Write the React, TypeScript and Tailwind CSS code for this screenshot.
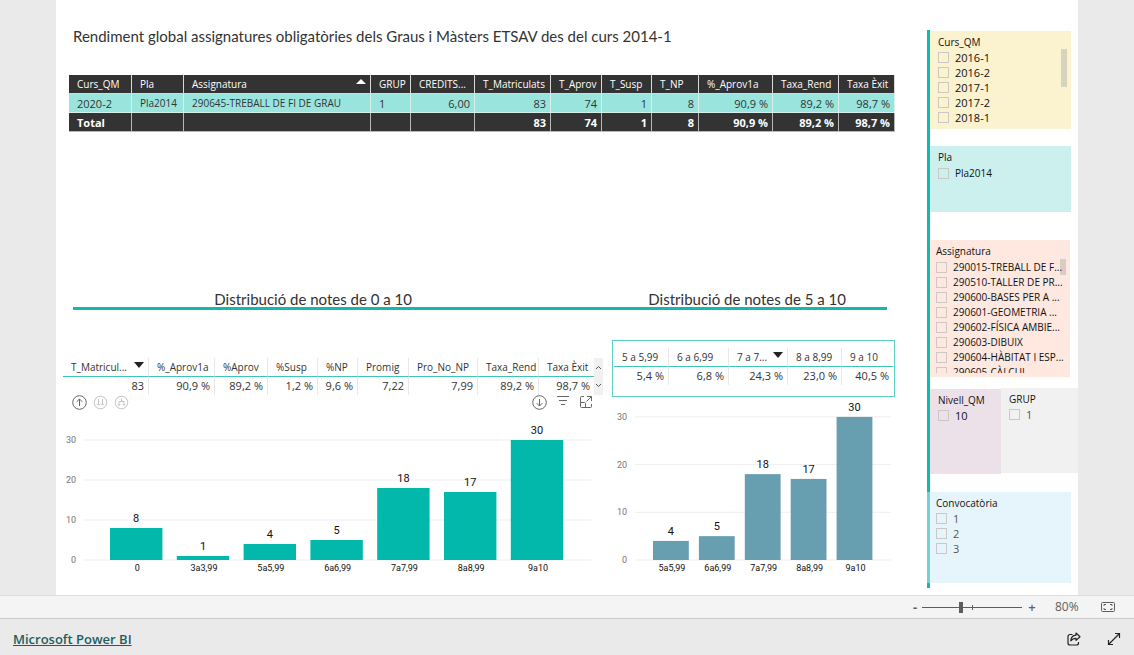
import React from "react";

type Column = { label: string; width: string; value: string; total?: string; left?: boolean; sort?: "asc" | "desc" };

const summary: Column[] = [
  { label: "Curs_QM", width: "w-[63px]", value: "2020-2", total: "Total", left: true },
  { label: "Pla", width: "w-[52px]", value: "Pla2014", left: true },
  { label: "Assignatura", width: "w-[187px]", value: "290645-TREBALL DE FI DE GRAU", left: true, sort: "asc" },
  { label: "GRUP", width: "w-[40px]", value: "1", left: true },
  { label: "CREDITS...", width: "w-[64px]", value: "6,00" },
  { label: "T_Matriculats", width: "w-[76px]", value: "83", total: "83" },
  { label: "T_Aprov", width: "w-[51px]", value: "74", total: "74" },
  { label: "T_Susp", width: "w-[50px]", value: "1", total: "1" },
  { label: "T_NP", width: "w-[47px]", value: "8", total: "8" },
  { label: "%_Aprov1a", width: "w-[74px]", value: "90,9 %", total: "90,9 %" },
  { label: "Taxa_Rend", width: "w-[66px]", value: "89,2 %", total: "89,2 %" },
  { label: "Taxa Èxit", width: "w-[56px]", value: "98,7 %", total: "98,7 %" },
];

const allGrades: Column[] = [
  { label: "T_Matricul...", width: "w-[86px]", value: "83", sort: "desc" },
  { label: "%_Aprov1a", width: "w-[66px]", value: "90,9 %" },
  { label: "%Aprov", width: "w-[53px]", value: "89,2 %" },
  { label: "%Susp", width: "w-[50px]", value: "1,2 %" },
  { label: "%NP", width: "w-[40px]", value: "9,6 %" },
  { label: "Promig", width: "w-[51px]", value: "7,22" },
  { label: "Pro_No_NP", width: "w-[69px]", value: "7,99" },
  { label: "Taxa_Rend", width: "w-[61px]", value: "89,2 %" },
  { label: "Taxa Èxit", width: "w-[55px]", value: "98,7 %" },
];

const passGrades: Column[] = [
  { label: "5 a 5,99", width: "w-[55px]", value: "5,4 %" },
  { label: "6 a 6,99", width: "w-[60px]", value: "6,8 %" },
  { label: "7 a 7...", width: "w-[59px]", value: "24,3 %", sort: "desc" },
  { label: "8 a 8,99", width: "w-[54px]", value: "23,0 %" },
  { label: "9 a 10", width: "w-[51px]", value: "40,5 %" },
];

function SummaryTable() {
  return (
    <table className="w-full table-fixed border-separate border-spacing-0 whitespace-nowrap text-[11px] leading-[17px]">
      <thead>
        <tr className="bg-[#333333] text-[10px] text-white">
          {summary.map((c) => (
            <th key={c.label} scope="col" className={`${c.width} h-[19px] border-r border-b border-[#d8d8d8] p-0 pt-px pl-2 text-left font-medium`}>
              <div className="flex justify-between pr-1">
                {c.label}
                {c.sort && (
                  <svg viewBox="0 0 10 5" className="mt-[3px] h-[5px] w-[10px]" fill="#fff"><path d="M0 5 5 0l5 5z" /></svg>
                )}
              </div>
            </th>
          ))}
        </tr>
      </thead>
      <tbody>
        <tr className="bg-[#99e5de] text-[#333333]">
          {summary.map((c) => (
            <td key={c.label} className={`h-[19px] border-r border-b border-[#d8efec] p-0 pt-px align-middle ${c.left ? "pl-2" : "pr-1 text-right"} ${c.value.length > 6 ? "text-[10px]" : ""}`}>{c.value}</td>
          ))}
        </tr>
        <tr className="bg-[#333333] font-bold text-white">
          {summary.map((c) => (
            <td key={c.label} className={`h-[19px] border-r border-b border-[#b8b8b8] p-0 pt-px ${c.left ? "pl-2" : "pr-1 text-right"}`}>{c.total}</td>
          ))}
        </tr>
      </tbody>
    </table>
  );
}

function GradeTable({ columns }: { columns: Column[] }) {
  return (
    <table className="w-full table-fixed border-separate border-spacing-0 whitespace-nowrap text-[11px] text-[#333333]">
      <thead>
        <tr className="text-[10px]">
          {columns.map((c) => (
            <th key={c.label} scope="col" className={`${c.width} border-r border-b border-r-[#e8e8e8] border-b-[#3fc4b9] p-0 pt-px pl-2 text-left leading-[17px] font-normal last:border-r-0`}>
              <div className="flex justify-between pr-1">
                {c.label}
                {c.sort && (
                  <svg viewBox="0 0 10 6" className="mt-[3px] h-[6px] w-[10px]" fill="#222"><path d="M0 0h10L5 6z" /></svg>
                )}
              </div>
            </th>
          ))}
        </tr>
      </thead>
      <tbody>
        <tr>
          {columns.map((c) => (
            <td key={c.label} className="border-r border-[#e8e8e8] p-0 pr-1 text-right leading-[18px] last:border-r-0">{c.value}</td>
          ))}
        </tr>
      </tbody>
    </table>
  );
}

type ChartProps = {
  name: string; data: [string, number][]; width: number; height: number; base: number; unit: number;
  left: number; right: number; first: number; step: number; bar: number; fill: string;
};

function BarChart(p: ChartProps) {
  return (
    <svg viewBox={`0 0 ${p.width} ${p.height}`} className="block w-full font-['Roboto',sans-serif]" role="img" aria-label={p.name}>
      {[0, 10, 20, 30].map((t) => (
        <g key={t}>
          <line x1={p.left} x2={p.right} y1={p.base - t * p.unit} y2={p.base - t * p.unit} stroke="#efefef" />
          <text x={p.left - 8} y={p.base - t * p.unit + 3} textAnchor="end" fontSize="9" fill="#777">{t}</text>
        </g>
      ))}
      {p.data.map(([label, value], i) => {
        const x = p.first + i * p.step;
        const y = p.base - value * p.unit;
        return (
          <g key={label} textAnchor="middle">
            <rect x={x} y={y} width={p.bar} height={value * p.unit} fill={p.fill} />
            <text x={x + p.bar / 2} y={y - 6} fontSize="11" fill="#111">{value}</text>
            <text x={x + p.bar / 2 + 1} y={p.base + 11} fontSize="9" fill="#111">{label}</text>
          </g>
        );
      })}
    </svg>
  );
}

type SlicerProps = { title: string; items: string[]; className: string; muted?: boolean; compact?: boolean };

function Slicer({ title, items, className, muted, compact }: SlicerProps) {
  return (
    <fieldset className={`min-w-0 overflow-hidden ${className}`}>
      <legend className="float-left w-full text-[10px] leading-[14px] text-[#111111]">{title}</legend>
      <div className={`clear-both ${compact ? "pt-[2px] text-[10px]" : "pt-px text-[11px]"}`}>
        {items.map((item) => (
          <label key={item} className={`flex h-[15px] items-center gap-[6px] leading-[15px] whitespace-nowrap ${muted ? "text-[#555555]" : "text-[#111111]"}`}>
            <input type="checkbox" className="size-[11px] shrink-0 appearance-none border border-[#cbc8c5]" />
            {item}
          </label>
        ))}
      </div>
    </fieldset>
  );
}

const drill = "size-[15px]";

function DrillBar() {
  return (
    <div className="mb-[2px] flex h-[14px] items-center justify-between pr-[10px] pl-[9px]">
      <div className="flex items-center gap-[6px]">
        <button type="button" aria-label="Drill up" className="text-[#666666]">
          <svg viewBox="0 0 15 15" className={drill} fill="none" stroke="currentColor"><circle cx="7.5" cy="7.5" r="6.8" /><path d="M7.5 11V4M4.7 6.8 7.5 4l2.8 2.8" /></svg>
        </button>
        <button type="button" aria-label="Next level" className="text-[#c4c4c4]">
          <svg viewBox="0 0 15 15" className={drill} fill="none" stroke="currentColor"><circle cx="7.5" cy="7.5" r="6.3" /><path d="M5.5 4v6M9.5 4v6M4 8.7l1.5 1.5L7 8.7M8 8.7l1.5 1.5L11 8.7" /></svg>
        </button>
        <button type="button" aria-label="Expand level" className="text-[#c4c4c4]">
          <svg viewBox="0 0 15 15" className={drill} fill="none" stroke="currentColor"><circle cx="7.5" cy="7.5" r="6.3" /><path d="M7.5 3.5v3M5 10.5v-4h5v4M3.7 9.2 5 10.5l1.3-1.3M8.7 9.2l1.3 1.3 1.3-1.3" /></svg>
        </button>
      </div>
      <div className="flex items-center gap-[9px] text-[#666666]">
        <button type="button" aria-label="Drill down">
          <svg viewBox="0 0 15 15" className={drill} fill="none" stroke="currentColor"><circle cx="7.5" cy="7.5" r="6.8" /><path d="M7.5 4v7M4.7 8.2 7.5 11l2.8-2.8" /></svg>
        </button>
        <button type="button" aria-label="Filters">
          <svg viewBox="0 0 14 14" className="size-[14px]" fill="none" stroke="currentColor"><path d="M1 1.5h12M3 5.5h8M5 9.5h4" /></svg>
        </button>
        <button type="button" aria-label="Focus mode">
          <svg viewBox="0 0 14 14" className="size-[14px]" fill="none" stroke="currentColor"><path d="M5 1.5H2.5a1 1 0 0 0-1 1v9a1 1 0 0 0 1 1h9a1 1 0 0 0 1-1V9M8 1.5h4.5V6M12.5 1.5l-5 5M1.5 7.5h4a1 1 0 0 1 1 1v4" /></svg>
        </button>
      </div>
    </div>
  );
}

export default function App() {
  return (
    <div className="flex min-h-screen flex-col bg-[#eaeaea] font-['Open_Sans','Noto_Sans',sans-serif]">
      <main className="mx-14 flex flex-1 bg-white pb-[7px]">
        <div className="min-w-0 flex-1 pr-8 pl-[7px]">
          <h1 className="pt-6 pl-[10px] font-['Lato','Open_Sans',sans-serif] text-[15px] leading-6 text-[#333333]">Rendiment global assignatures obligatòries dels Graus i Màsters ETSAV des del curs 2014-1</h1>
          <div className="mt-[27px] ml-[6px]"><SummaryTable /></div>

          <div className="mt-[159px] mr-2 ml-[10px] flex border-b-[3px] border-[#12b9ad] pt-px font-['Lato','Open_Sans',sans-serif] text-[15px] leading-[15px] text-[#333333]">
            <h2 className="w-[59%] text-center">Distribució de notes de 0 a 10</h2>
            <h2 className="flex-1 pl-[54px] text-center">Distribució de notes de 5 a 10</h2>
          </div>

          <div className="flex">
            <section className="w-[540px] shrink grow pt-12">
              <div className="flex">
                <div className="min-w-0 flex-1"><GradeTable columns={allGrades} /></div>
                <div className="flex w-[9px] flex-col justify-between bg-[#f0f0f0] py-[7px]">
                  <svg viewBox="0 0 9 5" className="w-[9px]" fill="none" stroke="#555"><path d="M2 4l2.500-2.500L7 4" /></svg>
                  <svg viewBox="0 0 9 5" className="w-[9px]" fill="none" stroke="#555"><path d="M2 1l2.500 2.500L7 1" /></svg>
                </div>
              </div>
              <DrillBar />
              <BarChart name="Distribució de notes de 0 a 10" width={540} height={170} base={149} unit={4} left={21} right={528} first={47} step={66.8} bar={52.4} fill="#01b8aa"
                data={[["0", 8], ["3a3,99", 1], ["5a5,99", 4], ["6a6,99", 5], ["7a7,99", 18], ["8a8,99", 17], ["9a10", 30]]} />
            </section>
            <section className="ml-[9px] w-[283px] pt-[30px]">
              <div className="h-[57px] border border-[#5fcfc4] px-px pt-[7px]"><GradeTable columns={passGrades} /></div>
              <BarChart name="Distribució de notes de 5 a 10" width={283} height={180} base={163} unit={4.77} left={23} right={279} first={41} step={45.9} bar={35.8} fill="#679eb0"
                data={[["5a5,99", 4], ["6a6,99", 5], ["7a7,99", 18], ["8a8,99", 17], ["9a10", 30]]} />
            </section>
          </div>
        </div>

        <aside className="mt-[30px] w-[151px] shrink-0 self-start border-l-[3px] border-[#12b9ad] pb-[5px]">
          <div className="mt-px mr-[7px] flex justify-between bg-[#fbf2cf]">
            <Slicer title="Curs_QM" items={["2016-1", "2016-2", "2017-1", "2017-2", "2018-1"]} className="h-[98px] pt-1 pl-2" />
            <div className="mt-[18px] mr-1 h-[38px] w-[6px] bg-[#d6d3bf]" />
          </div>
          <Slicer title="Pla" items={["Pla2014"]} compact className="mt-[17px] mr-[7px] h-[66px] bg-[#ccf0ed] pt-1 pl-2" />
          <div className="relative mt-7 mr-2 h-[137px] bg-[#fee8df]">
            <div className="absolute top-[19px] right-1 h-4 w-[6px] bg-[#d9cbc6]" />
            <Slicer title="Assignatura" compact className="relative h-[133px] pt-1 pl-[6px]"
              items={["290015-TREBALL DE F...", "290510-TALLER DE PR...", "290600-BASES PER A ...", "290601-GEOMETRIA ...", "290602-FÍSICA AMBIE...", "290603-DIBUIX", "290604-HÀBITAT I ESP...", "290605-CÀLCUL"]} />
          </div>
          <div className="mt-[11px] flex">
            <Slicer title="Nivell_QM" items={["10"]} className="mt-px h-[85px] w-[71px] bg-[#ece1e9] pt-1 pl-2" />
            <Slicer title="GRUP" items={["1"]} muted className="h-[85px] flex-1 bg-[#f1f1f1] pt-1 pl-2" />
          </div>
          <Slicer title="Convocatòria" items={["1", "2", "3"]} muted className="mt-[18px] mr-[7px] -ml-[3px] h-[91px] bg-[#cdebf7]/50 pt-1 pl-[9px]" />
        </aside>
      </main>

      <div className="flex h-6 items-center justify-end border-y border-t-[#dddddd] border-b-[#c8c8c8] bg-[#f4f4f4] pr-[19px] text-[#605e5c]">
        <button type="button" aria-label="Zoom out" className="w-[14px] text-[13px] leading-4 font-bold">-</button>
        <div className="relative flex h-4 w-[100px] items-center">
          <input type="range" aria-label="Zoom" min={0} max={100} defaultValue={39}
            className="h-px w-full appearance-none bg-[#605e5c] [&::-webkit-slider-thumb]:h-[11px] [&::-webkit-slider-thumb]:w-1 [&::-webkit-slider-thumb]:appearance-none [&::-webkit-slider-thumb]:bg-[#605e5c]" />
          <span className="absolute top-[6px] left-1/2 h-[5px] w-px bg-[#605e5c]" />
        </div>
        <button type="button" aria-label="Zoom in" className="w-5 text-[13px] leading-4 font-semibold">+</button>
        <span className="ml-[13px] w-6 text-xs leading-4">80%</span>
        <button type="button" aria-label="Fit to page" className="ml-[22px]">
          <svg viewBox="0 0 14 10" className="h-[10px] w-[14px]" fill="none" stroke="currentColor"><rect x=".5" y=".5" width="13" height="9" rx="1" /><path d="M5 2.500H3v1.500M9 2.500h2v1.500M5 7.500H3V6M9 7.500h2V6" /></svg>
        </button>
      </div>

      <footer className="flex h-9 items-center justify-between pt-1 pr-[13px] pl-[13px]">
        <a href="#" className="text-[13px] leading-5 font-semibold text-[#1b5e5f] underline">Microsoft Power BI</a>
        <div className="flex items-center gap-[26px] text-[#222222]">
          <button type="button" aria-label="Share">
            <svg viewBox="0 0 14 14" className="size-[14px]" fill="none" stroke="currentColor" strokeWidth="1.200" strokeLinejoin="round"><path d="M5.500 2.500H3a2 2 0 0 0-2 2V11a2 2 0 0 0 2 2h6.500a2 2 0 0 0 2-2v-1M9 1l4 3.700-4 3.700V6.300C6.500 6.300 5 7 3.800 8.800 4 5.500 5.800 3.400 9 3.100z" /></svg>
          </button>
          <button type="button" aria-label="Full screen">
            <svg viewBox="0 0 14 14" className="size-[14px]" fill="none" stroke="currentColor" strokeWidth="1.200"><path d="M1.500 12.500l11-11M8 1.500h4.500V6M1.500 8v4.500H6" /></svg>
          </button>
        </div>
      </footer>
    </div>
  );
}
